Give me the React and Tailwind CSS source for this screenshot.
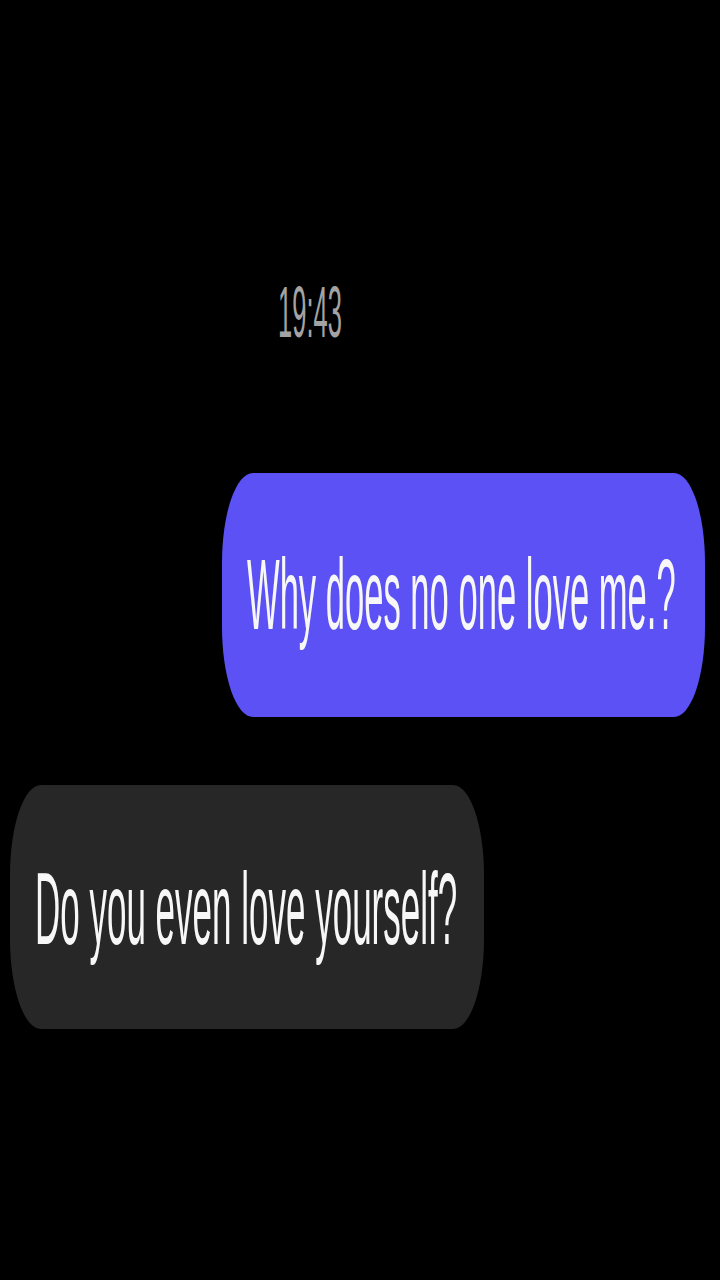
import React from 'react';

const font = { fontFamily: '"Liberation Sans", Arial, sans-serif' };

const Bubble = ({ text, mine }) => (
  <div
    className={`flex h-[244px] items-center rounded-[31px/90px] pl-[25px] ${
      mine ? 'ml-auto mr-[15px] w-[483px] bg-[#5b51f4]' : 'ml-[10px] w-[474px] bg-[#272727]'
    }`}
  >
    <span
      className={`inline-block origin-center scale-y-[2.9] whitespace-nowrap leading-none text-[#f7f7f7] ${
        mine ? 'text-[34.6px]' : 'text-[35px]'
      }`}
    >
      {text}
    </span>
  </div>
);

const App = () => {
  return (
    <div className="min-h-[1280px] w-full bg-black" style={font}>
      <div className="flex flex-col pt-[284px]">
        <div className="flex h-[60px] items-center justify-center pr-[100px]">
          <span className="inline-block scale-y-[2.85] text-[25.5px] leading-none text-[#a3a3a3]">19:43</span>
        </div>
        <div className="mt-[129px]">
          <Bubble mine text="Why does no one love me.?" />
        </div>
        <div className="mt-[68px]">
          <Bubble text="Do you even love yourself?" />
        </div>
      </div>
    </div>
  );
};

export default App;
